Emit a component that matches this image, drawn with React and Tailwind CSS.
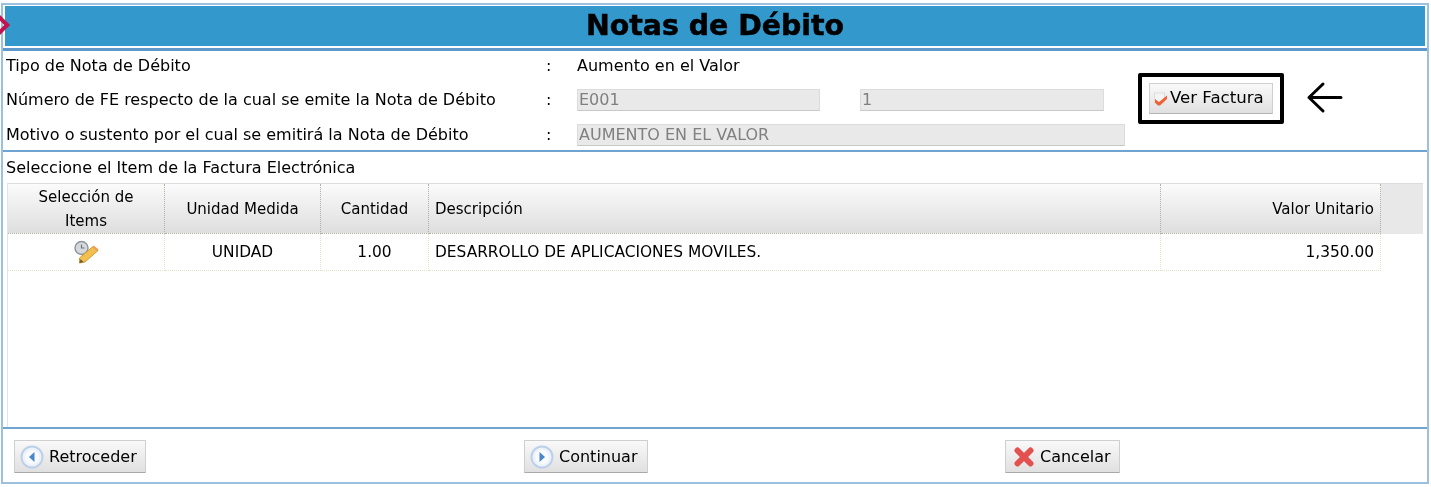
import React from "react";

const columns = [
  { label: "Unidad Medida", width: "w-[156px]", align: "text-center" },
  { label: "Cantidad", width: "w-[108px]", align: "text-center" },
  { label: "Descripción", width: "w-[732px]", align: "text-left pl-[6px]" },
  { label: "Valor Unitario", width: "w-[220px]", align: "text-right" },
];

const row = ["UNIDAD", "1.00", "DESARROLLO DE APLICACIONES MOVILES.", "1,350.00"];

const ArrowCircle = ({ dir }) => (
  <svg width="24" height="24" viewBox="0 0 24 24" className="shrink-0">
    <circle cx="12" cy="12" r="10.5" fill="#eef3fa" stroke="#bcd0ea" strokeWidth="2" />
    <circle cx="12" cy="12" r="7" fill="#f8fafd" />
    {dir === "left" ? (
      <path d="M14.5 7 L9 12 L14.5 17 Z" fill="#4a86c8" />
    ) : (
      <path d="M9.5 7 L15 12 L9.5 17 Z" fill="#4a86c8" />
    )}
  </svg>
);

const CrossIcon = () => (
  <svg width="22" height="22" viewBox="0 0 22 22" className="shrink-0">
    <path d="M4.5 4.5 L17.5 17.5 M17.5 4.5 L4.5 17.5" stroke="#e2504f" strokeWidth="6" strokeLinecap="round" />
  </svg>
);

const CheckIcon = () => (
  <svg width="16" height="16" viewBox="0 0 16 16" className="shrink-0">
    <rect x="1.5" y="2" width="10" height="10" fill="#f4f4f4" stroke="#dcdcdc" />
    <path d="M2 8 L6 11 L14 4.5 L14 8 L7 14.5 L5 14.5 L2 11.5 Z" fill="#ee6235" />
  </svg>
);

const PencilIcon = () => (
  <svg width="26" height="24" viewBox="0 0 26 24" className="mx-auto">
    <circle cx="8.5" cy="8" r="6.5" fill="#d5d8dc" stroke="#8d949c" strokeWidth="1.4" />
    <path d="M8.5 4.5 V8 H11.5" fill="none" stroke="#70777f" strokeWidth="1.2" />
    <path d="M6.5 18 L20 6.5 L25 10.5 L12 22 L6.5 23 Z" fill="#f2c04e" stroke="#cf9a2e" strokeWidth="1" />
    <path d="M20 6.5 L25 10.5" stroke="#e9a15c" strokeWidth="2.5" />
    <path d="M6.5 23 L7.5 19 L10.5 22 Z" fill="#6d5a3a" />
  </svg>
);

const Button = ({ icon, children, className = "" }) => (
  <button
    className={`flex h-[33px] items-center gap-[5px] rounded-[1px] border border-[#cfcfcf] border-b-[#a9a9a9] bg-gradient-to-b from-[#f9f9f9] to-[#e0e0e0] text-base text-black ${className}`}
  >
    {icon}
    {children}
  </button>
);

const DisabledInput = ({ value, className = "" }) => (
  <div
    className={`flex h-[22px] items-center border border-[#dcdcdc] border-b-[#c8c8c8] bg-[#e9e9e9] pl-px text-base text-[#808080] ${className}`}
  >
    {value}
  </div>
);

export default function App() {
  return (
    <div className="relative h-[487px] w-[1431px] overflow-hidden bg-white pl-px pt-[3px] font-['DejaVu_Sans',sans-serif] text-black blur-[0.4px]">
      <div className="h-[481px] w-[1428px] border-2 border-[#9cc0e0] bg-white">
        {/* title bar */}
        <div className="border-b-[3px] border-[#5f98cb] px-[2px] pb-[2px] pt-px">
          <div className="flex h-[40px] items-center justify-center bg-[#3399cc] text-[28.4px] font-bold text-black [-webkit-text-stroke:0.5px_black]">
            Notas de Débito
          </div>
        </div>

        {/* datos de la nota */}
        <div className="h-[101px] border-b-2 border-[#6ea3d2] px-[3px] text-base">
          <div className="flex h-[30px] items-center">
            <span className="w-[540px]">Tipo de Nota de Débito</span>
            <span className="w-[31px]">:</span>
            <span>Aumento en el Valor</span>
          </div>
          <div className="flex h-[37px] items-center">
            <span className="w-[540px] whitespace-nowrap">Número de FE respecto de la cual se emite la Nota de Débito</span>
            <span className="w-[31px]">:</span>
            <DisabledInput value="E001" className="w-[243px]" />
            <DisabledInput value="1" className="ml-[40px] w-[244px]" />
          </div>
          <div className="flex h-[34px] items-center">
            <span className="w-[540px]">Motivo o sustento por el cual se emitirá la Nota de Débito</span>
            <span className="w-[31px]">:</span>
            <DisabledInput value="AUMENTO EN EL VALOR" className="w-[548px]" />
          </div>
        </div>

        {/* items */}
        <div className="h-[277px] border-b-2 border-[#6ea3d2] px-[3px]">
          <div className="flex h-[31px] items-center text-base">Seleccione el Item de la Factura Electrónica</div>
          <div className="ml-px h-[244px] border-l border-[#dfe7ee]">
            <div className="flex h-[51px] w-[1415px] border-t border-[#dcdcdc] bg-[#e8e8e8] text-[15px]">
              <div className="flex w-[157px] items-center justify-center border-b border-r border-dotted border-[#b0b0a4] bg-gradient-to-b from-[#fbfbfb] to-[#dedede] text-center leading-[24px]">
                Selección de
                <br />
                Items
              </div>
              {columns.map((col) => (
                <div
                  key={col.label}
                  className={`${col.width} ${col.align} border-b border-r border-dotted border-[#b0b0a4] bg-gradient-to-b from-[#fbfbfb] to-[#dedede] px-[6px] leading-[50px]`}
                >
                  {col.label}
                </div>
              ))}
            </div>
            <div className="flex h-[37px] w-[1373px] text-[15.4px]">
              <div className="flex w-[157px] items-center border-b border-r border-dotted border-[#e5e2c8]">
                <PencilIcon />
              </div>
              {columns.map((col, i) => (
                <div
                  key={col.label}
                  className={`${col.width} ${col.align} border-b border-r border-dotted border-[#e5e2c8] px-[6px] leading-[36px]`}
                >
                  {row[i]}
                </div>
              ))}
            </div>
          </div>
        </div>

        {/* acciones */}
        <div className="flex items-start pl-[11px] pt-[11px]">
          <Button icon={<ArrowCircle dir="left" />} className="w-[132px] pl-[5px]">
            Retroceder
          </Button>
          <Button icon={<ArrowCircle dir="right" />} className="ml-[378px] w-[124px] pl-[5px]">
            Continuar
          </Button>
          <Button icon={<CrossIcon />} className="ml-[357px] w-[115px] pl-[7px]">
            Cancelar
          </Button>
        </div>
      </div>

      {/* marcador rojo sobre el borde */}
      <div className="absolute left-[-7px] top-[18px] h-[14px] w-[14px] rotate-45 border-r-[4px] border-t-[4px] border-[#c2134f]" />

      {/* boton resaltado */}
      <div className="absolute left-[1138px] top-[73px] flex h-[51px] w-[146px] items-center justify-center rounded-[2px] border-[4px] border-black bg-white">
        <button className="flex h-[31px] w-[124px] items-center gap-[1px] border border-[#d0d0d0] border-b-[#b5b5b5] bg-gradient-to-b from-[#f9f9f9] to-[#e0e0e0] pl-[3px] text-[16.6px] text-black">
          <CheckIcon />
          Ver Factura
        </button>
      </div>
      <svg width="38" height="34" viewBox="0 0 38 34" className="absolute left-[1306px] top-[81px]">
        <path d="M35 16.5 H3 M17 3 L3 16.5 L17 30" fill="none" stroke="black" strokeWidth="3" strokeLinecap="round" strokeLinejoin="round" />
      </svg>
    </div>
  );
}
